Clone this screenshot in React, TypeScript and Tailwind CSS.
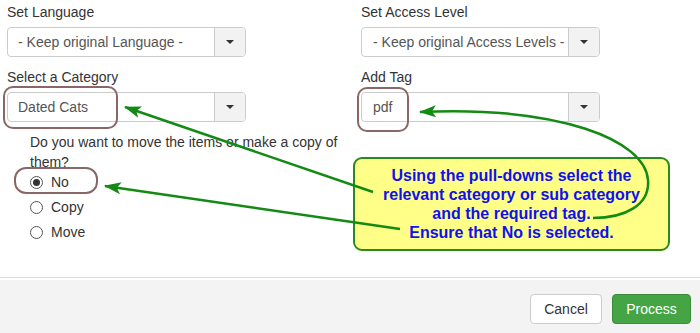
import React from 'react';

interface SelectBoxProps {
  label: string;
  value: string;
  textPad?: string;
}

const SelectBox: React.FC<SelectBoxProps> = ({ label, value, textPad = 'pl-[10px]' }) => {
  return (
    <div className="mb-[10px]">
      <div className="h-5 leading-5 mb-[5px]">{label}</div>
      <div className="flex h-[30px] w-[239px] rounded-[4px] border border-[#cccccc] bg-white overflow-hidden">
        <div className={`flex-1 flex items-center ${textPad} text-[#555555] whitespace-nowrap overflow-hidden`}>{value}</div>
        <div className="w-[31px] flex items-center justify-center border-l border-[#cccccc] bg-[#f2f2f2]">
          <span className="block w-0 h-0 border-l-[4px] border-r-[4px] border-t-[4px] border-l-transparent border-r-transparent border-t-[#333333]" />
        </div>
      </div>
    </div>
  );
};

const Radio: React.FC<{ label: string; checked?: boolean }> = ({ label, checked }) => (
  <div className="flex items-center h-5 gap-[8px]">
    <span className="w-[13px] h-[13px] rounded-full border border-[#555555] bg-white flex items-center justify-center">
      {checked && <span className="w-[7px] h-[7px] rounded-full bg-[#333333]" />}
    </span>
    <span>{label}</span>
  </div>
);

export default function App() {
  const green = '#138a13';
  return (
    <div className="relative w-[700px] h-[333px] bg-white overflow-hidden font-['Liberation_Sans',Arial,sans-serif] text-[14px] text-[#333333]">
      <div className="h-[277px] pt-[2px]">
        <div className="flex">
          <div className="w-[354px] pl-[7px]">
            <SelectBox label="Set Language" value="- Keep original Language -" />
            <SelectBox label="Select a Category" value="Dated Cats" />
          </div>
          <div className="pl-[7px]">
            <SelectBox label="Set Access Level" value="- Keep original Access Levels -" textPad="pl-[11px]" />
            <SelectBox label="Add Tag" value="pdf" textPad="pl-[11px]" />
          </div>
        </div>
        <div className="pl-[30px]">
          <p className="w-[320px] leading-5">Do you want to move the items or make a copy of them?</p>
          <div className="flex flex-col gap-[5px]">
            <Radio label="No" checked />
            <Radio label="Copy" />
            <Radio label="Move" />
          </div>
        </div>
      </div>

      <div className="border-t border-[#dddddd] pt-[2px]">
        <div className="h-[53px] bg-[#f3f3f3] flex justify-end items-start pt-[14px] pr-[9px] gap-[10px]">
          <button className="h-[30px] w-[72px] rounded-[4px] border border-[#cccccc] bg-white text-[#333333]">Cancel</button>
          <button className="h-[30px] w-[79px] rounded-[4px] border border-[#3d8b3d] bg-[#45a545] text-white">Process</button>
        </div>
      </div>

      {/* callout */}
      <div className="absolute left-[353px] top-[157px] w-[317px] h-[94px] rounded-[9px] border-2 border-[#2a8a1e] bg-[#ffff88] flex items-center justify-center">
        <p className="text-center font-bold text-[16px] text-[#1010f0] leading-[19px]">
          Using the pull-downs select the
          <br />
          relevant category or sub category
          <br />
          and the required tag.
          <br />
          Ensure that No is selected.
        </p>
      </div>

      <svg className="absolute left-0 top-0 pointer-events-none" width="700" height="333" viewBox="0 0 700 333">
        <defs>
          <marker id="ah" markerWidth="18" markerHeight="12" refX="16" refY="6" orient="auto" markerUnits="userSpaceOnUse">
            <path d="M0,0 L17,6 L0,12 L4,6 z" fill={green} />
          </marker>
        </defs>
        <rect x="4" y="87" width="113" height="41" rx="9" fill="none" stroke="#8a6767" strokeWidth="2" />
        <rect x="358" y="88" width="50" height="43" rx="9" fill="none" stroke="#8a6767" strokeWidth="2" />
        <rect x="15" y="168" width="82" height="25" rx="11" fill="none" stroke="#8a6767" strokeWidth="2" />
        <line x1="373" y1="192" x2="125" y2="107" stroke={green} strokeWidth="2.5" markerEnd="url(#ah)" />
        <line x1="400" y1="229" x2="105" y2="186" stroke={green} strokeWidth="2.5" markerEnd="url(#ah)" />
        <path d="M 593 218 C 625 218, 650 205, 648 180 C 645 140, 560 106, 420 112" fill="none" stroke={green} strokeWidth="2.5" markerEnd="url(#ah)" />
      </svg>
    </div>
  );
}
